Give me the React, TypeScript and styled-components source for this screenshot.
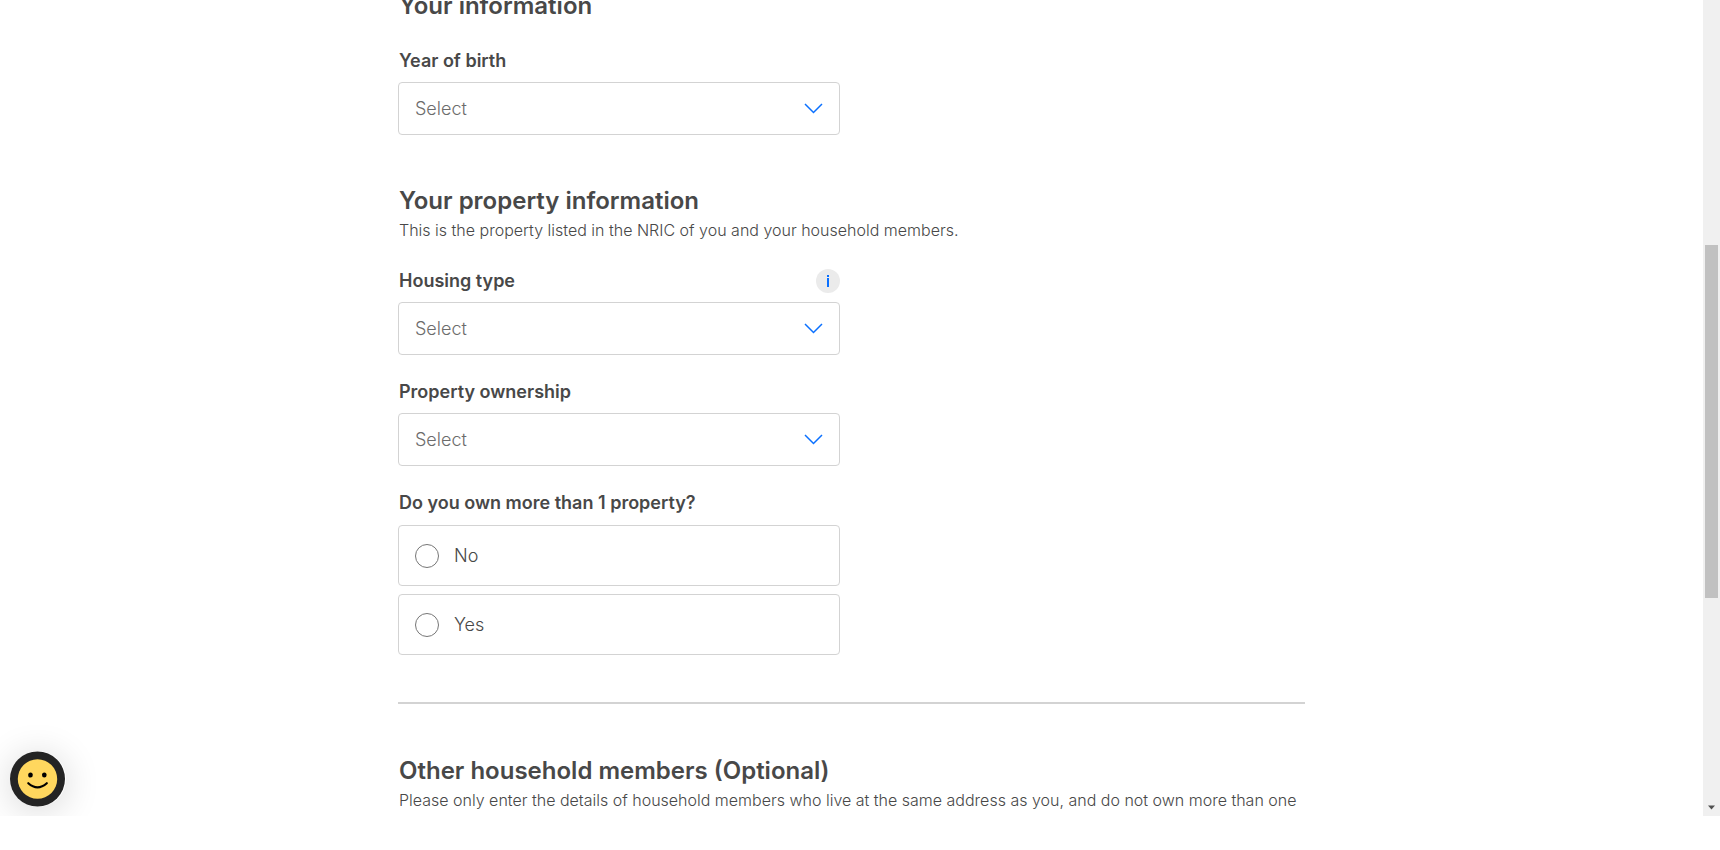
import React from 'react';
import styled, { createGlobalStyle } from 'styled-components';

const GlobalStyle = createGlobalStyle`
  * { box-sizing: border-box; }
  body {
    margin: 0;
    background: #fff;
    color: #484848;
    font-family: Inter, "Liberation Sans", sans-serif;
    font-size: 16px;
    font-weight: 300;
  }
`;

const Shell = styled.div`
  position: relative;
  display: flex;
  height: calc(100vh - 34px);
  overflow: hidden;
`;

const Pane = styled.main`
  flex: 1;
  min-width: 0;
  overflow: hidden;
`;

const Column = styled.form`
  max-width: 907px;
  margin: -10px auto 0;
`;

const Section = styled.section`
  & + & { margin-top: 50px; }
`;

const Heading = styled.h2`
  margin: 0;
  padding-left: 1px;
  font-size: 24px;
  line-height: 32px;
  font-weight: 600;
`;

const Intro = styled.p`
  margin: 1px 0 0;
  padding-left: 1px;
  line-height: 24px;
`;

const Fields = styled.div`
  display: flex;
  flex-direction: column;
  gap: 25px;
  max-width: 442px;
  margin-top: 27px;
`;

const Field = styled.div`
  display: flex;
  flex-direction: column;
  gap: 9px;
`;

const LabelRow = styled.div`
  display: flex;
  justify-content: space-between;
  align-items: center;
  padding-left: 1px;
`;

const Label = styled.label`
  font-size: 18px;
  line-height: 24px;
  font-weight: 600;
`;

const InfoButton = styled.button`
  display: flex;
  align-items: center;
  justify-content: center;
  width: 24px;
  height: 24px;
  padding: 0;
  border: 0;
  border-radius: 50%;
  background: #ebebeb;
`;

const SelectWrap = styled.div`
  position: relative;
`;

const Select = styled.select`
  appearance: none;
  display: block;
  width: 100%;
  height: 53px;
  padding: 0 48px 0 16px;
  border: 1px solid #d3d3d3;
  border-radius: 4px;
  background: #fff;
  color: #6c6c6c;
  font: inherit;
  font-size: 18px;
`;

const Chevron = styled.svg`
  position: absolute;
  top: 21px;
  right: 17px;
  pointer-events: none;
`;

const RadioGroup = styled.fieldset`
  display: flex;
  flex-direction: column;
  gap: 8px;
  margin: 0;
  padding: 0;
  border: 0;
`;

const Legend = styled.legend`
  margin-bottom: 10px;
  padding: 0 0 0 1px;
  font-size: 18px;
  line-height: 24px;
  font-weight: 600;
`;

const RadioCard = styled.label`
  display: flex;
  align-items: center;
  gap: 15px;
  height: 61px;
  padding: 0 16px;
  border: 1px solid #d3d3d3;
  border-radius: 4px;
  font-size: 18px;
`;

const Radio = styled.input`
  appearance: none;
  width: 24px;
  height: 24px;
  margin: 0;
  border: 1px solid #767676;
  border-radius: 50%;
  &:checked { border: 7px solid #0a70ff; }
`;

const Divider = styled.hr`
  height: 2px;
  margin: 47px 0 51px;
  border: 0;
  background: #d3d3d3;
`;

const Feedback = styled.button`
  position: absolute;
  left: 10px;
  bottom: 9px;
  width: 56px;
  height: 56px;
  padding: 0;
  border: 0;
  border-radius: 50%;
  background: none;
  box-shadow: 0 4px 36px rgba(0, 0, 0, 0.16);
`;

const Scrollbar = styled.div`
  display: flex;
  flex-direction: column;
  align-items: center;
  width: 17px;
  padding-bottom: 6px;
  background: #f0f0f0;
`;

const Space = styled.div<{ $grow: number }>`
  flex: ${p => p.$grow} 1 0;
`;

const Thumb = styled.div`
  flex: 353 1 0;
  width: 13px;
  background: #c1c1c1;
`;

function SelectField({ id, label, info, options }: { id: string; label: string; info?: boolean; options: string[] }) {
  return (
    <Field>
      <LabelRow>
        <Label htmlFor={id}>{label}</Label>
        {info && (
          <InfoButton type="button" aria-label={`About ${label.toLowerCase()}`}>
            <svg width="24" height="24" viewBox="0 0 24 24" fill="#0a70ff">
              <rect x="11" y="6" width="2" height="2" />
              <rect x="11" y="9" width="2" height="9" />
            </svg>
          </InfoButton>
        )}
      </LabelRow>
      <SelectWrap>
        <Select id={id}>
          <option>Select</option>
          {options.map(o => <option key={o}>{o}</option>)}
        </Select>
        <Chevron width="19" height="12" viewBox="0 0 19 12" fill="none" stroke="#0a70ff" strokeWidth="1.5">
          <path d="M1 1 L9.5 9.5 L18 1" />
        </Chevron>
      </SelectWrap>
    </Field>
  );
}

function RadioOption({ value }: { value: string }) {
  return (
    <RadioCard>
      <Radio type="radio" name="multiple" value={value} />
      {value}
    </RadioCard>
  );
}

export default function App() {
  return (
    <>
      <GlobalStyle />
      <Shell>
        <Pane>
          <Column>
            <Section>
              <Heading>Your information</Heading>
              <Fields>
                <SelectField id="birth" label="Year of birth" options={['1980', '1990', '2000']} />
              </Fields>
            </Section>
            <Section>
              <Heading>Your property information</Heading>
              <Intro>This is the property listed in the NRIC of you and your household members.</Intro>
              <Fields>
                <SelectField id="housing" label="Housing type" info options={['HDB', 'Private']} />
                <SelectField id="ownership" label="Property ownership" options={['Owned', 'Rented']} />
                <RadioGroup>
                  <Legend>Do you own more than 1 property?</Legend>
                  <RadioOption value="No" />
                  <RadioOption value="Yes" />
                </RadioGroup>
              </Fields>
            </Section>
            <Divider />
            <Section>
              <Heading>Other household members (Optional)</Heading>
              <Intro>
                Please only enter the details of household members who live at the same address as you, and do not own more than one
              </Intro>
            </Section>
          </Column>
        </Pane>
        <Feedback type="button" aria-label="Feedback">
          <svg width="56" height="56" viewBox="0 0 56 56">
            <circle cx="27.5" cy="28" r="27.5" fill="#242424" />
            <circle cx="27.5" cy="28" r="19.7" fill="#ffd75e" />
            <ellipse cx="20.5" cy="24" rx="2.3" ry="2.6" />
            <ellipse cx="34.3" cy="24" rx="2.3" ry="2.6" />
            <path d="M18.3 32.2 Q27.5 40.5 36.8 32.2" fill="none" stroke="#000" strokeWidth="2.2" strokeLinecap="round" />
          </svg>
        </Feedback>
        <Scrollbar aria-hidden="true">
          <Space $grow={245} />
          <Thumb />
          <Space $grow={207} />
          <svg width="7" height="5" viewBox="0 0 7 5" fill="#505050">
            <path d="M0 0.5 H7 L3.5 4.5 Z" />
          </svg>
        </Scrollbar>
      </Shell>
    </>
  );
}
